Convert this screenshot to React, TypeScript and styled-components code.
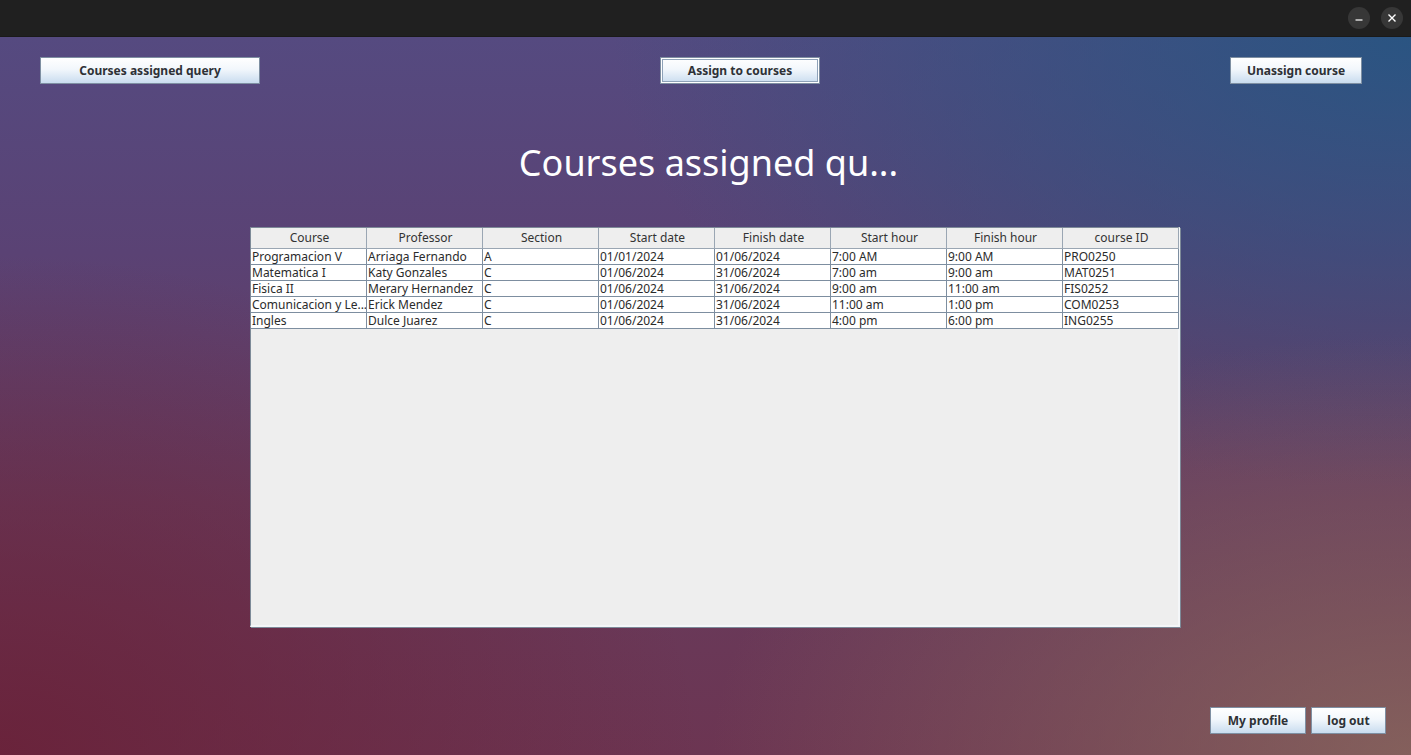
import React from "react";
import styled, { createGlobalStyle } from "styled-components";

const Global = createGlobalStyle`
  html, body { margin: 0; padding: 0; }
  body { font-family: "Noto Sans", "Open Sans", sans-serif; }
  #root { width: 1411px; height: 755px; }
`;

const Window = styled.div`
  width: 1411px;
  height: 755px;
  display: flex;
  flex-direction: column;
  overflow: hidden;
`;

const TitleBar = styled.div`
  height: 36px;
  background: #202020;
  border-bottom: 1px solid #1a1a1a;
  display: flex;
  align-items: center;
  justify-content: flex-end;
  gap: 11px;
  padding-right: 8px;
  flex-shrink: 0;
`;

const WinButton = styled.div`
  width: 22px;
  height: 22px;
  border-radius: 50%;
  background: #373737;
  display: flex;
  align-items: center;
  justify-content: center;
`;

const Content = styled.div`
  flex: 1;
  position: relative;
  display: flex;
  flex-direction: column;
  background:
    radial-gradient(ellipse 700px 420px at 100% 100%, rgba(140, 110, 95, 0.75), rgba(140, 110, 95, 0) 100%),
    radial-gradient(ellipse 800px 450px at 100% 0%, rgba(40, 85, 130, 0.95), rgba(40, 85, 130, 0) 100%),
    radial-gradient(ellipse 700px 500px at 0% 100%, rgba(105, 32, 55, 0.85), rgba(105, 32, 55, 0) 100%),
    linear-gradient(180deg, #554a80 0%, #5a4274 30%, #673c5e 65%, #6c3552 100%);
`;

const TopRow = styled.div`
  display: flex;
  align-items: center;
  padding: 20px 49px 0 40px;
`;

const Button = styled.button<{ $w: number; $focus?: boolean; $ml?: string }>`
  width: ${(p) => p.$w}px;
  height: 27px;
  margin-left: ${(p) => p.$ml ?? "0"};
  box-sizing: border-box;
  font-family: "Noto Sans", sans-serif;
  font-weight: 700;
  font-size: 12px;
  color: #2e3136;
  background: linear-gradient(180deg, #ffffff 0%, #f2f7fc 45%, #c9dcef 100%);
  border: 1px solid #7e8fa2;
  box-shadow: ${(p) => (p.$focus ? "inset 0 0 0 1px #ffffff, inset 0 0 0 2px #8ea2b8" : "none")};
  padding: 0;
  cursor: default;
`;

const Title = styled.h1`
  margin: 55px 0 0 0;
  padding-left: 6px;
  text-align: center;
  font-family: "Noto Sans", sans-serif;
  font-weight: 400;
  font-size: 36px;
  line-height: 48px;
  color: #ffffff;
`;

const TableFrame = styled.div`
  margin: 40px 0 0 250px;
  width: 930px;
  height: 400px;
  box-sizing: border-box;
  border: 1px solid #7d8a98;
  border-right: 2px solid #f4f6f8;
  border-bottom: 2px solid #f4f6f8;
  box-shadow: 1px 1px 0 #7d8a98;
  background: #eeeeee;
  display: flex;
  flex-direction: column;
`;

const Row = styled.div<{ $header?: boolean }>`
  display: grid;
  grid-template-columns: repeat(8, 116px);
  height: ${(p) => (p.$header ? 21 : 16)}px;
  background: ${(p) => (p.$header ? "#eeeeee" : "#ffffff")};
`;

const Cell = styled.div<{ $header?: boolean }>`
  box-sizing: border-box;
  border-right: 1px solid ${(p) => (p.$header ? "#9aa6b3" : "#7d8ea0")};
  border-bottom: 1px solid ${(p) => (p.$header ? "#9aa6b3" : "#7d8ea0")};
  font-family: "Noto Sans", sans-serif;
  font-size: 12px;
  line-height: ${(p) => (p.$header ? 19 : 15)}px;
  color: ${(p) => (p.$header ? "#333333" : "#2b2b2b")};
  text-align: ${(p) => (p.$header ? "center" : "left")};
  padding-left: ${(p) => (p.$header ? 2 : 1)}px;
  white-space: nowrap;
  overflow: hidden;
`;

const BottomRow = styled.div`
  margin-top: auto;
  display: flex;
  justify-content: flex-end;
  gap: 5px;
  padding: 0 25px 21px 0;
`;

const headers = ["Course", "Professor", "Section", "Start date", "Finish date", "Start hour", "Finish hour", "course ID"];

const rows = [
  ["Programacion V", "Arriaga Fernando", "A", "01/01/2024", "01/06/2024", "7:00 AM", "9:00 AM", "PRO0250"],
  ["Matematica I", "Katy Gonzales", "C", "01/06/2024", "31/06/2024", "7:00 am", "9:00 am", "MAT0251"],
  ["Fisica II", "Merary Hernandez", "C", "01/06/2024", "31/06/2024", "9:00 am", "11:00 am", "FIS0252"],
  ["Comunicacion y Le...", "Erick Mendez", "C", "01/06/2024", "31/06/2024", "11:00 am", "1:00 pm", "COM0253"],
  ["Ingles", "Dulce Juarez", "C", "01/06/2024", "31/06/2024", "4:00 pm", "6:00 pm", "ING0255"],
];

export default function App() {
  return (
    <>
      <Global />
      <Window>
        <TitleBar>
          <WinButton>
            <svg width="10" height="10" viewBox="0 0 10 10">
              <line x1="1.5" y1="7" x2="8.5" y2="7" stroke="#ffffff" strokeWidth="1.2" />
            </svg>
          </WinButton>
          <WinButton>
            <svg width="10" height="10" viewBox="0 0 10 10">
              <path d="M1.5 1.5 L8.5 8.5 M8.5 1.5 L1.5 8.5" stroke="#ffffff" strokeWidth="1.4" />
            </svg>
          </WinButton>
        </TitleBar>
        <Content>
          <TopRow>
            <Button $w={220}>Courses assigned query</Button>
            <Button $w={160} $focus $ml="400px">Assign to courses</Button>
            <Button $w={132} $ml="auto">Unassign course</Button>
          </TopRow>
          <Title>Courses assigned qu...</Title>
          <TableFrame>
            <Row $header>
              {headers.map((h) => (
                <Cell $header key={h}>{h}</Cell>
              ))}
            </Row>
            {rows.map((r, i) => (
              <Row key={i}>
                {r.map((c, j) => (
                  <Cell key={j}>{c}</Cell>
                ))}
              </Row>
            ))}
          </TableFrame>
          <BottomRow>
            <Button $w={96}>My profile</Button>
            <Button $w={75}>log out</Button>
          </BottomRow>
        </Content>
      </Window>
    </>
  );
}
